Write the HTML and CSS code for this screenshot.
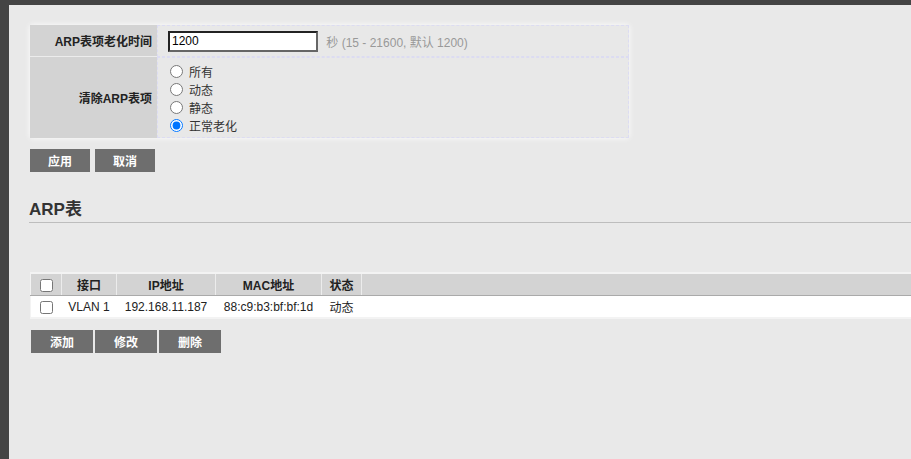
FILE: index.html
```html
<!DOCTYPE html>
<html lang="zh-CN">
<head>
  <meta charset="UTF-8">
  <title>ARP</title>
  <link rel="stylesheet" href="styles.css">
</head>
<body>
  <div class="main">
    <table class="form-table">
      <tr>
        <td class="label first">ARP表项老化时间</td>
        <td class="value first-val">
          <input type="text" class="text-input" value="1200">
          <span class="hint">秒 (15 - 21600, 默认 1200)</span>
        </td>
      </tr>
      <tr>
        <td class="label tall">清除ARP表项</td>
        <td class="value radios">
          <label class="radio-row"><input type="radio" name="clear"> 所有</label>
          <label class="radio-row"><input type="radio" name="clear"> 动态</label>
          <label class="radio-row"><input type="radio" name="clear"> 静态</label>
          <label class="radio-row"><input type="radio" name="clear" checked> 正常老化</label>
        </td>
      </tr>
    </table>

    <div class="btn-bar">
      <button class="btn">应用</button>
      <button class="btn">取消</button>
    </div>

    <h2 class="section-title">ARP表</h2>

    <table class="list-table">
      <thead>
        <tr>
          <th class="col-cb"><input type="checkbox"></th>
          <th class="col-if">接口</th>
          <th class="col-ip">IP地址</th>
          <th class="col-mac">MAC地址</th>
          <th class="col-st">状态</th>
          <th class="col-rest"></th>
        </tr>
      </thead>
      <tbody>
        <tr>
          <td><input type="checkbox"></td>
          <td>VLAN 1</td>
          <td>192.168.11.187</td>
          <td>88:c9:b3:bf:bf:1d</td>
          <td>动态</td>
          <td></td>
        </tr>
      </tbody>
    </table>

    <div class="btn-bar small-gap">
      <button class="btn wide">添加</button>
      <button class="btn wide">修改</button>
      <button class="btn wide">删除</button>
    </div>
  </div>
</body>
</html>
```

FILE: styles.css
```css
html, body {
  margin: 0;
  padding: 0;
  height: 100%;
}

body {
  background: #444;
  font-family: "Liberation Sans", "Noto Sans CJK SC", sans-serif;
  font-size: 12px;
  color: #222;
}

.main {
  margin-left: 9px;
  margin-top: 5px;
  background: #e9e9e9;
  min-height: calc(100% - 5px);
  padding: 20px 0 0 21px;
  box-sizing: border-box;
  overflow: hidden;
}

/* settings form */
.form-table {
  width: 599px;
  border-spacing: 0;
  box-shadow: 0 0 6px rgba(255,255,255,0.9);
}

.form-table td {
  padding: 0;
}

.label {
  width: 122px;
  background: #d3d3d3;
  text-align: right;
  padding-right: 5px !important;
  font-weight: bold;
  color: #222;
}

.label.first {
  height: 31px;
  border-bottom: 1px solid #ececec;
}

.label.tall {
  height: 79px;
}

.value {
  background: #e8e8e8;
  border: 1px dashed #dcdcf2;
  padding-left: 10px !important;
}

.first-val {
  height: 29px;
}

.text-input {
  width: 142px;
  height: 17px;
  padding: 0 2px;
  margin: 0 3px 0 0;
  border: 2px solid;
  border-color: #222 #666 #666 #222;
  font-family: "Liberation Sans", sans-serif;
  font-size: 12px;
  color: #000;
  vertical-align: middle;
  box-sizing: content-box;
}

.hint {
  color: #999;
  margin-left: 2px;
  vertical-align: middle;
}

.radios {
  padding-top: 4px !important;
  padding-bottom: 3px !important;
  vertical-align: top;
}

.radio-row {
  display: flex;
  align-items: center;
  height: 18px;
  color: #333;
}

.radio-row input {
  width: 13px;
  height: 13px;
  margin: 0 6px 0 2px;
}

/* buttons */
.btn-bar {
  display: flex;
  gap: 5px;
  margin-top: 11px;
}

.btn {
  width: 60px;
  height: 23px;
  padding: 0;
  border: none;
  background: #6e6e6e;
  color: #fff;
  font-family: "Liberation Sans", "Noto Sans CJK SC", sans-serif;
  font-size: 12px;
  font-weight: bold;
}

.btn-bar.small-gap {
  gap: 2px;
  margin-left: 1px;
}

.btn.wide {
  width: 62px;
}

.section-title {
  margin: 28px 0 0 -1px;
  font-size: 17px;
  line-height: 20px;
  font-weight: bold;
  color: #333;
  padding-bottom: 2px;
  border-bottom: 1px solid #bdbdbd;
}

/* list table */
.list-table {
  margin-top: 49px;
  width: calc(100% + 10px);
  border-collapse: collapse;
  border-top: 2px solid #f3f3f3;
  border-left: 1px solid #f3f3f3;
  border-bottom: 2px solid #f3f3f3;
}

.list-table th {
  height: 21px;
  padding: 0;
  background: #d3d3d3;
  border-right: 1px solid #ececec;
  border-bottom: 1px solid #aaa;
  font-weight: bold;
  color: #222;
}

.list-table td {
  height: 21px;
  padding: 0;
  background: #fff;
  text-align: center;
  color: #222;
}

.list-table input[type="checkbox"] {
  width: 13px;
  height: 13px;
  margin: 0;
  vertical-align: middle;
}

.col-cb { width: 30px; }
.col-if { width: 54px; }
.col-ip { width: 98px; }
.col-mac { width: 105px; }
.col-st { width: 39px; }
```
